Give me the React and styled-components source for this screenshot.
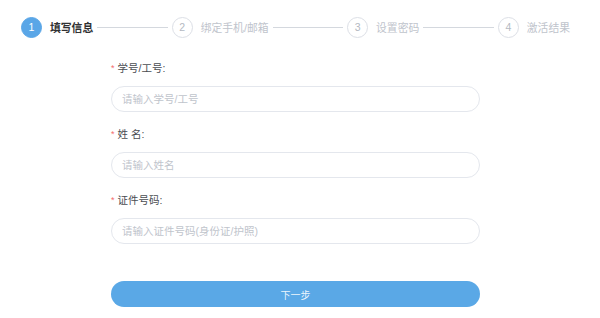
import React from 'react';
import styled, { createGlobalStyle } from 'styled-components';

const GlobalStyle = createGlobalStyle`
    html, body {
        margin: 0;
        padding: 0;
        background: #ffffff;
        font-family: "Liberation Sans", "Noto Sans CJK SC", sans-serif;
    }
`;

const Page = styled.div`
    width: 600px;
    height: 318px;
    background: #ffffff;
    overflow: hidden;
`;

const Steps = styled.div`
    display: flex;
    align-items: center;
    padding: 16px 30px 0 21px;
    height: 22px;
`;

const Step = styled.div`
    display: flex;
    align-items: center;
    flex-shrink: 0;
`;

const Circle = styled.div`
    width: 21px;
    height: 21px;
    box-sizing: border-box;
    border-radius: 50%;
    border: 1px solid ${({ active }) => (active ? '#5aa6e7' : '#dcdfe6')};
    background: ${({ active }) => (active ? '#5aa6e7' : '#ffffff')};
    color: ${({ active }) => (active ? '#ffffff' : '#b4b9c2')};
    font-size: 10.5px;
    display: flex;
    align-items: center;
    justify-content: center;
`;

const StepTitle = styled.span`
    margin-left: 8px;
    font-size: 10.8px;
    font-weight: ${({ active }) => (active ? 'bold' : 'normal')};
    color: ${({ active }) => (active ? '#303133' : '#c0c4cc')};
    white-space: nowrap;
`;

const Line = styled.div`
    flex: 1;
    height: 1px;
    background: #d4d8de;
    margin: 0 4px;
`;

const Form = styled.div`
    width: 369px;
    margin: 22px 0 0 111px;
`;

const Field = styled.div`
    margin-bottom: 14px;
`;

const Label = styled.div`
    height: 16px;
    line-height: 16px;
    font-size: 10.5px;
    color: #4a4d52;
    margin-bottom: 10px;
    display: flex;
    align-items: center;
`;

const Star = styled.span`
    color: #f56c6c;
    font-size: 9px;
    margin-right: 3px;
`;

const Input = styled.input`
    display: block;
    width: 100%;
    height: 26px;
    box-sizing: border-box;
    border: 1px solid #e4e7ed;
    border-radius: 13px;
    padding: 0 10px;
    font-family: inherit;
    font-size: 10.5px;
    color: #606266;
    outline: none;
    &::placeholder {
        color: #c0c4cc;
    }
`;

const Submit = styled.button`
    display: block;
    width: 100%;
    height: 26px;
    margin-top: 37px;
    border: none;
    border-radius: 13px;
    background: #5aa8e6;
    color: rgba(255, 255, 255, 0.9);
    font-family: inherit;
    font-size: 10px;
    cursor: pointer;
`;

const steps = ['填写信息', '绑定手机/邮箱', '设置密码', '激活结果'];

const fields = [
    { label: '学号/工号:', placeholder: '请输入学号/工号' },
    { label: '姓 名:', placeholder: '请输入姓名' },
    { label: '证件号码:', placeholder: '请输入证件号码(身份证/护照)' },
];

export default function App() {
    return (
        <Page>
            <GlobalStyle />
            <Steps>
                {steps.map((title, i) => (
                    <React.Fragment key={title}>
                        {i > 0 && <Line />}
                        <Step>
                            <Circle active={i === 0}>{i + 1}</Circle>
                            <StepTitle active={i === 0}>{title}</StepTitle>
                        </Step>
                    </React.Fragment>
                ))}
            </Steps>
            <Form>
                {fields.map(f => (
                    <Field key={f.label}>
                        <Label><Star>*</Star>{f.label}</Label>
                        <Input placeholder={f.placeholder} />
                    </Field>
                ))}
                <Submit>下一步</Submit>
            </Form>
        </Page>
    );
}
